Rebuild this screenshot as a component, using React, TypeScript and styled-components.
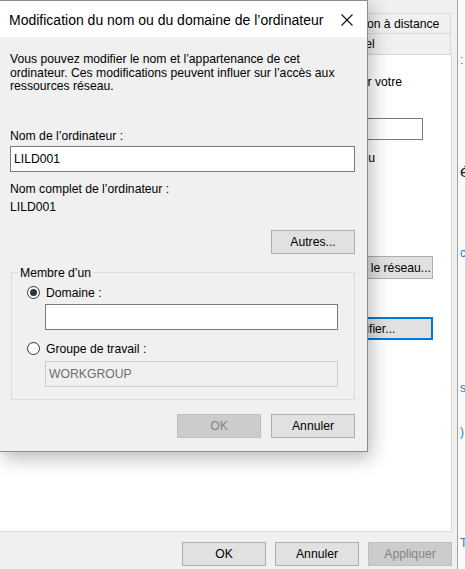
import React from "react";
import styled, { createGlobalStyle } from "styled-components";

const Global = createGlobalStyle`
  html, body { margin: 0; padding: 0; background: #fff; }
  body {
    font-family: "Liberation Sans", Arial, sans-serif;
    font-size: 12.2px;
    color: #000;
    overflow: hidden;
  }
  * { box-sizing: border-box; }
`;

const Screen = styled.div`
  position: relative;
  width: 465px;
  height: 569px;
  overflow: hidden;
  display: flex;
  background: #fff;
`;

/* ---------- window behind (Propriétés système) ---------- */
const BackWindow = styled.div`
  width: 458px;
  height: 569px;
  flex: none;
  background: #f0f0f0;
  border-right: 1px solid #a3a3a3;
  display: flex;
  flex-direction: column;
  padding: 13px 5px 3px 0;
`;

const TabRow = styled.div<{ $h: number }>`
  display: flex;
  height: ${(p) => p.$h}px;
  padding-right: 1px;
`;

const Tab = styled.div<{ $w?: number; $active?: boolean }>`
  flex: ${(p) => (p.$w ? `0 0 ${p.$w}px` : "1 1 0")};
  min-width: 0;
  margin-left: -1px;
  border: 1px solid #d9d9d9;
  border-bottom: none;
  background: ${(p) => (p.$active ? "#fff" : "#f0f0f0")};
  display: flex;
  align-items: center;
  justify-content: center;
  white-space: nowrap;
  overflow: hidden;
  line-height: 14px;
`;

const Panel = styled.div`
  flex: 1;
  background: #fff;
  border: 1px solid #d9d9d9;
  border-left: none;
  display: flex;
  flex-direction: column;
  padding: 20px 18px 0 16px;
`;

const PanelLine = styled.div<{ $inset?: number; $right?: boolean; $gap?: number }>`
  line-height: 14px;
  white-space: nowrap;
  text-align: ${(p) => (p.$right ? "right" : "left")};
  padding-right: ${(p) => p.$inset ?? 0}px;
  margin-top: ${(p) => p.$gap ?? 0}px;
`;

const FieldRow = styled.div<{ $gap: number }>`
  display: flex;
  align-items: center;
  justify-content: space-between;
  margin-top: ${(p) => p.$gap}px;
`;

const DescInput = styled.input`
  width: 230px;
  height: 22px;
  margin-right: 10px;
  border: 1px solid #7a7a7a;
  background: #fff;
  font: inherit;
  padding: 0 3px;
  outline: none;
`;

const WinButton = styled.button<{ $w: number; $h?: number; $disabled?: boolean; $focus?: boolean }>`
  width: ${(p) => p.$w}px;
  height: ${(p) => p.$h ?? 24}px;
  flex: none;
  font: inherit;
  line-height: 14px;
  padding: 0;
  text-align: center;
  color: ${(p) => (p.$disabled ? "#838383" : "#000")};
  background: ${(p) => (p.$disabled ? "#cccccc" : "#e1e1e1")};
  border: 1px solid ${(p) => (p.$disabled ? "#bfbfbf" : p.$focus ? "#0078d7" : "#adadad")};
  box-shadow: ${(p) => (p.$focus ? "inset 0 0 0 1px #0078d7" : "none")};
  white-space: nowrap;
  overflow: hidden;
`;

const PanelButton = styled(WinButton)<{ $gap: number }>`
  align-self: flex-end;
  margin-top: ${(p) => p.$gap}px;
`;

const BottomBar = styled.div`
  display: flex;
  justify-content: flex-end;
  gap: 9px;
  margin-top: 10px;
`;

/* ---------- sliver of the window further behind ---------- */
const ThirdWindow = styled.div`
  flex: 1;
  background: #fafafa;
  display: flex;
  flex-direction: column;
  padding-left: 2px;
  overflow: hidden;
`;

const Frag = styled.span<{ $gap: number; $dark?: boolean }>`
  display: block;
  margin-top: ${(p) => p.$gap}px;
  color: ${(p) => (p.$dark ? "#1e1e1e" : "#2a7bd0")};
  font-size: ${(p) => (p.$dark ? 17 : 12)}px;
  line-height: ${(p) => (p.$dark ? 18 : 14)}px;
  white-space: nowrap;
`;

/* ---------- front dialog ---------- */
const Dialog = styled.div`
  position: absolute;
  top: 0;
  left: 0;
  width: 368px;
  background: #f0f0f0;
  border: 1px solid #8c8c8c;
  border-left: none;
  box-shadow: 3px 6px 18px rgba(0, 0, 0, 0.28);
  display: flex;
  flex-direction: column;
`;

const TitleBar = styled.div`
  height: 36px;
  background: #fff;
  display: flex;
  align-items: center;
  justify-content: space-between;
  padding: 2px 14px 0 9px;
`;

const TitleText = styled.span`
  font-size: 14px;
  line-height: 18px;
  white-space: nowrap;
`;

const CloseIcon = styled.svg`
  width: 12px;
  height: 12px;
  display: block;
`;

const DialogBody = styled.div`
  display: flex;
  flex-direction: column;
  padding: 16px 12px 13px 10px;
`;

const Para = styled.p`
  margin: 0;
  line-height: 13.6px;
`;

const Label = styled.div<{ $gap: number }>`
  line-height: 14px;
  margin-top: ${(p) => p.$gap}px;
  white-space: nowrap;
`;

const TextBox = styled.input<{ $gap: number; $indent?: number }>`
  height: 26px;
  margin: ${(p) => p.$gap}px 0 0 ${(p) => p.$indent ?? 0}px;
  border: 1px solid #7a7a7a;
  background: #fff;
  color: #000;
  font: inherit;
  padding: 0 3px;
  outline: none;
  &:disabled {
    background: #f0f0f0;
    border-color: #cccccc;
    color: #6d6d6d;
  }
`;

const Group = styled.fieldset`
  margin: 12px 0 0 1px;
  padding: 0;
  min-width: 0;
  border: 1px solid #dcdcdc;
`;

const Legend = styled.legend`
  margin-left: 6px;
  padding: 0 2px;
  line-height: 14px;
`;

const GroupInner = styled.div`
  display: flex;
  flex-direction: column;
  padding: 6px 16px 12px 15px;
`;

const RadioRow = styled.label<{ $gap: number }>`
  display: flex;
  align-items: center;
  gap: 6px;
  height: 14px;
  margin-top: ${(p) => p.$gap}px;
  white-space: nowrap;
`;

const RadioCircle = styled.span<{ $checked?: boolean }>`
  width: 13px;
  height: 13px;
  border-radius: 50%;
  border: 1px solid #333;
  background: #fff;
  display: flex;
  align-items: center;
  justify-content: center;
  flex: none;
  &::after {
    content: "";
    width: 7px;
    height: 7px;
    border-radius: 50%;
    background: ${(p) => (p.$checked ? "#333" : "transparent")};
  }
`;

const ButtonRow = styled.div`
  display: flex;
  justify-content: flex-end;
  gap: 10px;
  margin-top: 14px;
`;

const RightButton = styled(WinButton)<{ $gap: number }>`
  align-self: flex-end;
  margin-top: ${(p) => p.$gap}px;
`;

export default function App() {
  return (
    <>
      <Global />
      <Screen>
        <BackWindow>
          <TabRow $h={20}>
            <Tab>Paramètres système</Tab>
            <Tab>Protection</Tab>
            <Tab $w={135}>Utilisation à distance</Tab>
          </TabRow>
          <TabRow $h={21}>
            <Tab $active>Nom de l’ordinateur</Tab>
            <Tab $w={196}>Matériel</Tab>
          </TabRow>
          <Panel>
            <PanelLine $right $inset={31}>
              Windows utilise les informations suivantes pour identifier votre
            </PanelLine>
            <PanelLine>ordinateur sur le réseau.</PanelLine>
            <FieldRow $gap={15}>
              <span>Description de l’ordinateur :</span>
              <DescInput readOnly value="" />
            </FieldRow>
            <PanelLine $right $inset={58} $gap={11}>
              Par exemple : « Ordinateur de la cuisine » ou
            </PanelLine>
            <PanelLine>« Ordinateur de Marie ».</PanelLine>
            <PanelLine $gap={12}>Nom complet de l’ordinateur :&nbsp;&nbsp;LILD001</PanelLine>
            <PanelLine>Groupe de travail :&nbsp;&nbsp;WORKGROUP</PanelLine>
            <PanelLine $gap={9}>Pour utiliser un Assistant pour joindre</PanelLine>
            <PanelLine>un domaine, cliquez sur ID réseau.</PanelLine>
            <PanelButton $w={128} $h={23} $gap={0}>
              Identité sur le réseau...
            </PanelButton>
            <PanelLine $gap={6}>Pour renommer cet ordinateur,</PanelLine>
            <PanelLine>cliquez sur Modifier.</PanelLine>
            <PanelButton $w={128} $h={23} $gap={4} $focus>
              Modifier...
            </PanelButton>
          </Panel>
          <BottomBar>
            <WinButton $w={84}>OK</WinButton>
            <WinButton $w={84}>Annuler</WinButton>
            <WinButton $w={84} $disabled>
              Appliquer
            </WinButton>
          </BottomBar>
        </BackWindow>

        <ThirdWindow>
          <Frag $gap={53}>:</Frag>
          <Frag $gap={96} $dark>
            é
          </Frag>
          <Frag $gap={65}>c</Frag>
          <Frag $gap={121}>s</Frag>
          <Frag $gap={30}>)</Frag>
          <Frag $gap={97}>T</Frag>
        </ThirdWindow>

        <Dialog>
          <TitleBar>
            <TitleText>Modification du nom ou du domaine de l’ordinateur</TitleText>
            <CloseIcon viewBox="0 0 12 12">
              <path d="M0.5 0.5 L11.5 11.5 M11.5 0.5 L0.5 11.5" stroke="#111" strokeWidth="1.1" fill="none" />
            </CloseIcon>
          </TitleBar>
          <DialogBody>
            <Para>
              Vous pouvez modifier le nom et l’appartenance de cet
              <br />
              ordinateur. Ces modifications peuvent influer sur l’accès aux
              <br />
              ressources réseau.
            </Para>
            <Label $gap={35}>Nom de l’ordinateur :</Label>
            <TextBox $gap={3} readOnly value="LILD001" />
            <Label $gap={10}>Nom complet de l’ordinateur :</Label>
            <Label $gap={4}>LILD001</Label>
            <RightButton $w={84} $gap={16}>
              Autres...
            </RightButton>
            <Group>
              <Legend>Membre d’un</Legend>
              <GroupInner>
                <RadioRow $gap={0}>
                  <RadioCircle $checked />
                  Domaine :
                </RadioRow>
                <TextBox $gap={4} $indent={18} readOnly value="" />
                <RadioRow $gap={12}>
                  <RadioCircle />
                  Groupe de travail :
                </RadioRow>
                <TextBox $gap={5} $indent={18} disabled value="WORKGROUP" />
              </GroupInner>
            </Group>
            <ButtonRow>
              <WinButton $w={84} $disabled>
                OK
              </WinButton>
              <WinButton $w={84}>Annuler</WinButton>
            </ButtonRow>
          </DialogBody>
        </Dialog>
      </Screen>
    </>
  );
}
